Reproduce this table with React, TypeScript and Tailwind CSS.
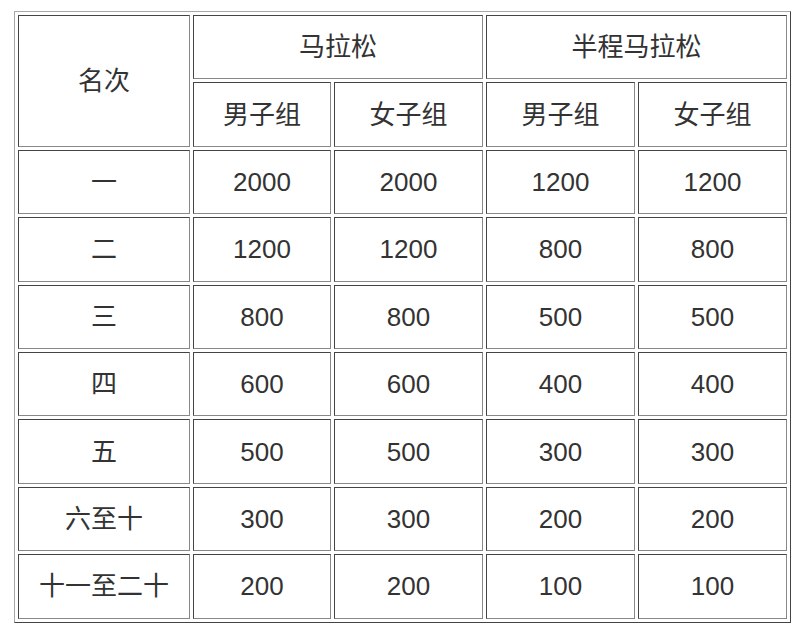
const rows: [string, string, string, string, string][] = [
  ['一', '2000', '2000', '1200', '1200'],
  ['二', '1200', '1200', '800', '800'],
  ['三', '800', '800', '500', '500'],
  ['四', '600', '600', '400', '400'],
  ['五', '500', '500', '300', '300'],
  ['六至十', '300', '300', '200', '200'],
  ['十一至二十', '200', '200', '100', '100'],
]

const cell =
  'h-[64.4px] p-0 text-center align-middle font-normal border border-solid border-t-[#444] border-l-[#444] border-r-[#888] border-b-[#888] bg-white'

export default function App() {
  return (
    <div className="w-[800px] h-[634px] bg-white pt-[11px] pl-[14px]">
      <table
        className="border-separate border-spacing-[3px] border border-solid border-t-[#a8a8a8] border-l-[#a8a8a8] border-r-[#444] border-b-[#444] text-[26px] text-[#333] leading-none"
        style={{ fontFamily: '"Liberation Sans", "Noto Sans CJK SC", sans-serif' }}
      >
        <colgroup>
          <col className="w-[172px]" />
          <col className="w-[138px]" />
          <col className="w-[149px]" />
          <col className="w-[149px]" />
          <col className="w-[149px]" />
        </colgroup>
        <thead>
          <tr>
            <th rowSpan={2} className={cell}>名次</th>
            <th colSpan={2} className={cell}>马拉松</th>
            <th colSpan={2} className={cell}>半程马拉松</th>
          </tr>
          <tr>
            <th className={cell}>男子组</th>
            <th className={cell}>女子组</th>
            <th className={cell}>男子组</th>
            <th className={cell}>女子组</th>
          </tr>
        </thead>
        <tbody>
          {rows.map((r) => (
            <tr key={r[0]}>
              {r.map((v, i) => (
                <td key={i} className={cell}>{v}</td>
              ))}
            </tr>
          ))}
        </tbody>
      </table>
    </div>
  )
}
